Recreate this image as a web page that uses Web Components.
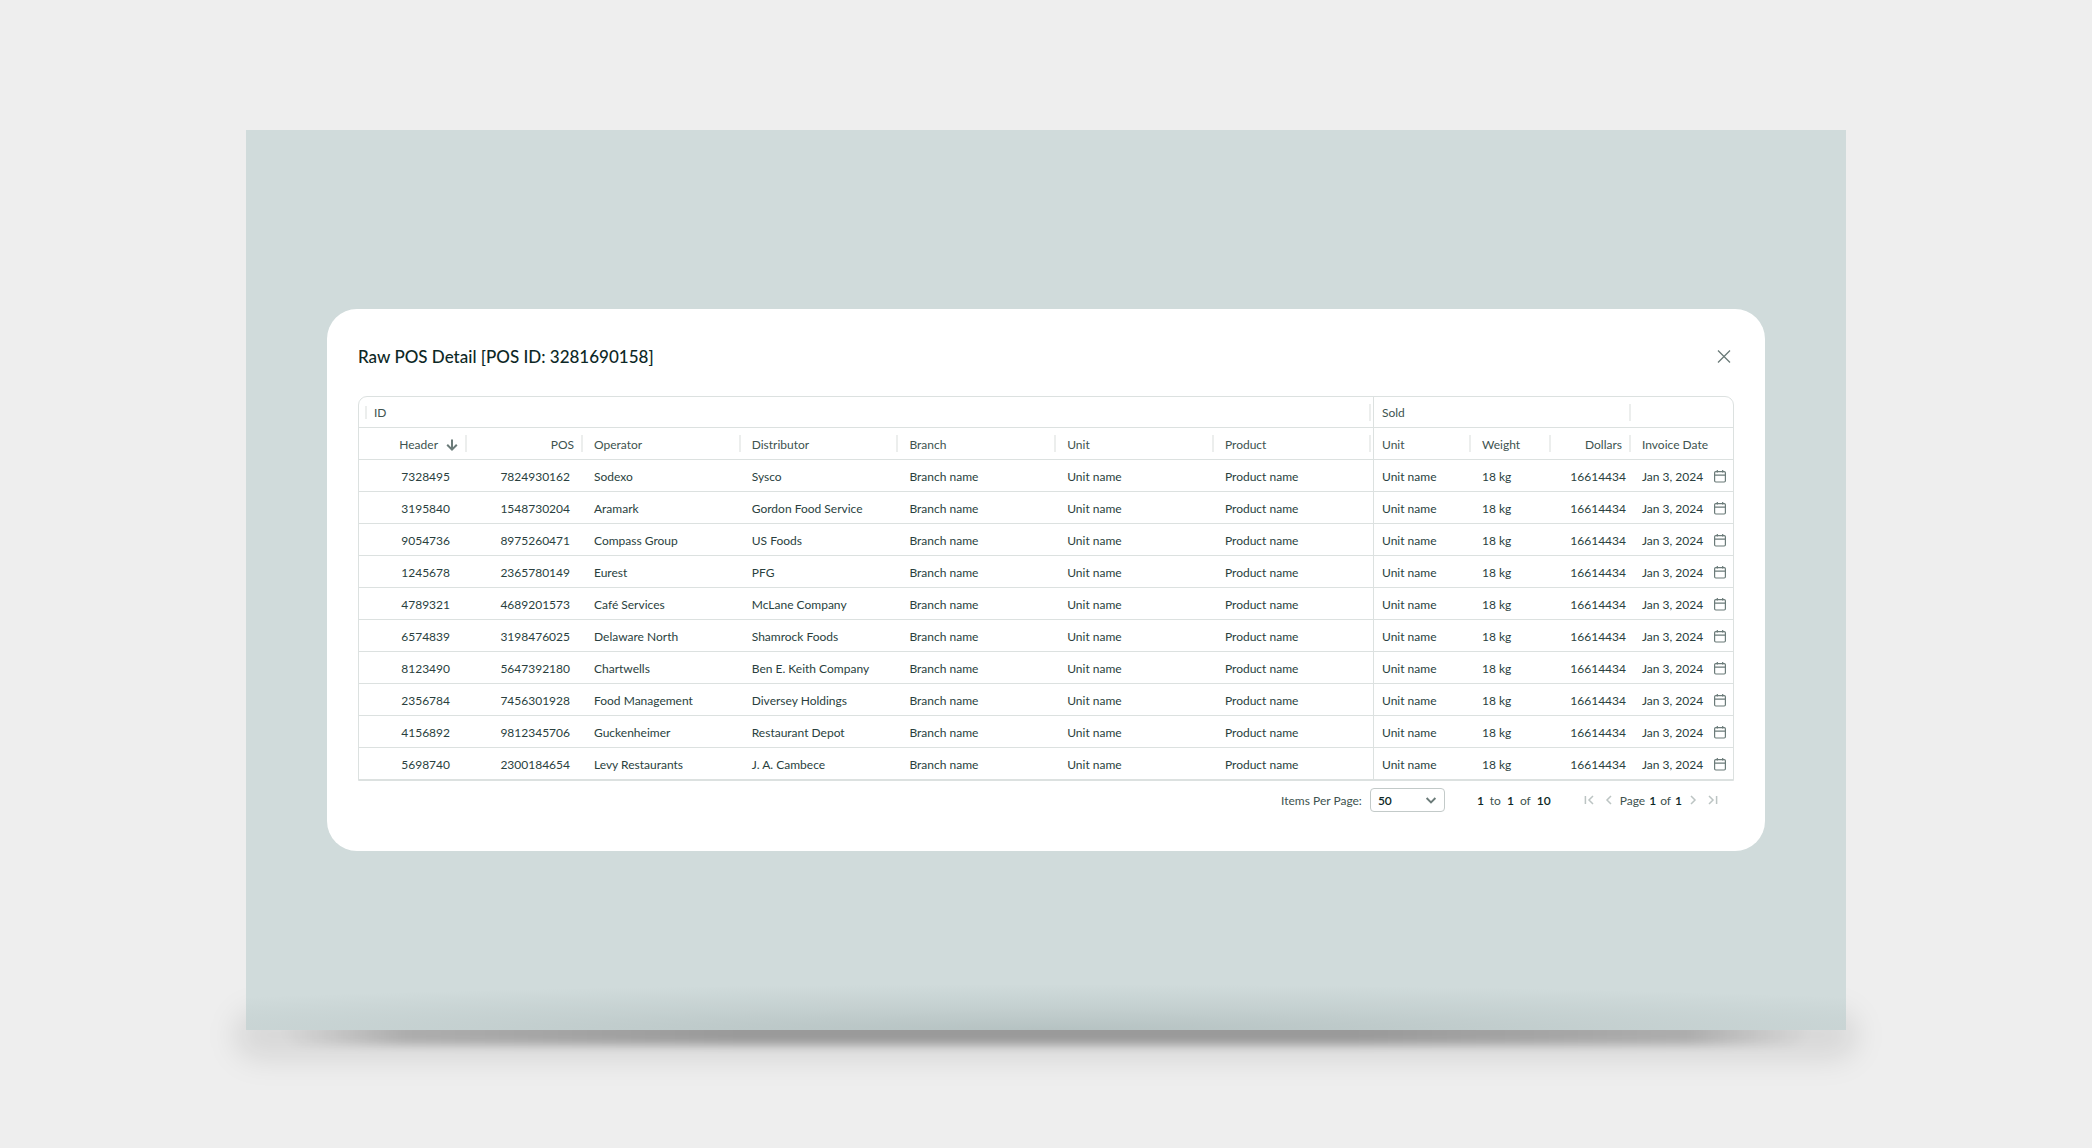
<!DOCTYPE html>
<html lang="en">
<head>
<meta charset="utf-8">
<title>Raw POS Detail</title>
<style>
    html, body {
        margin: 0;
        height: 100%;
    }

    body {
        background: #eeeeee;
        font-family: Lato, "Open Sans", sans-serif;
        font-size: 12px;
        line-height: 16px;
        color: #2a3f3e;
        --color-title: #0d2826;
        --color-muted: #40534f;
        --color-icon: #6b7b79;
        --color-line: #dce1e0;
        --color-tick: #eceeed;
    }
</style>
</head>
<body>
<pos-stage>
    <pos-dialog heading="Raw POS Detail [POS ID: 3281690158]">
        <pos-table></pos-table>
        <pos-pager slot="footer" from="1" to="1" total="10" page="1" pages="1"></pos-pager>
    </pos-dialog>
</pos-stage>

<script>
const ICONS = {
    close: '<path d="M2 1.5L14 13.5M14 1.5L2 13.5" stroke-width="1.3"/>',
    sort: '<path d="M8 2.4V12.4M3.2 7.8L8 12.6L12.8 7.8" stroke-width="2"/>',
    calendar: '<rect x="2.6" y="2.6" width="10.8" height="10.4" rx="1.2" stroke-width="1.2"/><path d="M2.6 6.1H13.4M5.3 1V3.6M10.7 1V3.6" stroke-width="1.2"/>',
    down: '<path d="M3.6 6L8 10.4L12.4 6" stroke-width="1.9"/>',
    first: '<path d="M4.4 4V12M12 4L8 8L12 12" stroke-width="1.5"/>',
    prev: '<path d="M10 4L6 8L10 12" stroke-width="1.5"/>',
    next: '<path d="M6 4L10 8L6 12" stroke-width="1.5"/>',
    last: '<path d="M11.6 4V12M4 4L8 8L4 12" stroke-width="1.5"/>'
};

class PosIcon extends HTMLElement {
    constructor() {
        super();
        this.attachShadow({ mode: "open" });
    }

    connectedCallback() {
        this.shadowRoot.innerHTML = /*html*/ `
            <style>
                :host { display: inline-block; width: 16px; height: 16px; }
                svg { display: block; width: 100%; height: 100%; }
            </style>
            <svg viewBox="0 0 16 16" fill="none" stroke="currentColor" aria-hidden="true">${ICONS[this.getAttribute('name')]}</svg>
        `;
    }
}

const stageTemplate = document.createElement('template');
stageTemplate.innerHTML = /*html*/ `
    <style>
        :host {
            display: flex;
            box-sizing: border-box;
            min-height: 100%;
            padding: 130px 246px 118px;
        }

        .panel {
            position: relative;
            z-index: 0;
            flex: 1;
            display: flex;
            align-items: center;
            padding: 32px 81px;
            background:
                radial-gradient(ellipse 72% 46px at 50% 100%, rgba(60, 80, 80, 0.18), rgba(60, 80, 80, 0.08) 50%, rgba(60, 80, 80, 0)),
                #d0dbdb;
        }

        /* soft shadow on the floor, with a darker core under the bottom edge */
        .shadow {
            position: absolute;
            z-index: -2;
            left: -12px;
            right: -12px;
            bottom: -30px;
            height: 50px;
            border-radius: 25px;
            background: rgba(0, 0, 0, 0.09);
            filter: blur(14px);
        }

        .shadow.core {
            left: 36px;
            right: 36px;
            bottom: -15px;
            height: 40px;
            background: linear-gradient(90deg, rgba(0, 0, 0, 0), rgba(0, 0, 0, 0.2) 8%, rgba(0, 0, 0, 0.29) 30%, rgba(0, 0, 0, 0.29) 70%, rgba(0, 0, 0, 0.2) 92%, rgba(0, 0, 0, 0));
            filter: blur(5px);
        }

        .wrap {
            position: relative;
            z-index: 0;
            flex: 1;
            display: flex;
        }

        slot {
            display: block;
            flex: 1;
        }
    </style>
    <div class="wrap">
        <div class="shadow"></div>
        <div class="shadow core"></div>
        <div class="panel"><slot></slot></div>
    </div>
`;

class PosStage extends HTMLElement {
    constructor() {
        super();
        this.attachShadow({ mode: "open" });
        this.shadowRoot.appendChild(stageTemplate.content.cloneNode(true));
    }
}

const dialogTemplate = document.createElement('template');
dialogTemplate.innerHTML = /*html*/ `
    <style>
        :host {
            display: block;
            box-sizing: border-box;
            padding: 32px 31px 39px;
            border-radius: 30px;
            background: #ffffff;
        }

        header {
            display: flex;
            align-items: center;
            justify-content: space-between;
            margin-bottom: 24px;
        }

        h1 {
            margin: 0;
            font-size: 17px;
            line-height: 31px;
            font-weight: 500;
            color: var(--color-title);
        }

        button {
            display: flex;
            padding: 2px;
            border: 0;
            background: none;
            color: var(--color-icon);
        }
    </style>
    <header>
        <h1></h1>
        <button type="button" aria-label="Close"><pos-icon name="close"></pos-icon></button>
    </header>
    <slot></slot>
    <slot name="footer"></slot>
`;

class PosDialog extends HTMLElement {
    constructor() {
        super();
        this.attachShadow({ mode: "open" });
        this.shadowRoot.appendChild(dialogTemplate.content.cloneNode(true));
    }

    connectedCallback() {
        this.shadowRoot.querySelector('h1').textContent = this.getAttribute('heading');
    }
}

const ROWS = [
    ['7328495', '7824930162', 'Sodexo', 'Sysco'],
    ['3195840', '1548730204', 'Aramark', 'Gordon Food Service'],
    ['9054736', '8975260471', 'Compass Group', 'US Foods'],
    ['1245678', '2365780149', 'Eurest', 'PFG'],
    ['4789321', '4689201573', 'Café Services', 'McLane Company'],
    ['6574839', '3198476025', 'Delaware North', 'Shamrock Foods'],
    ['8123490', '5647392180', 'Chartwells', 'Ben E. Keith Company'],
    ['2356784', '7456301928', 'Food Management', 'Diversey Holdings'],
    ['4156892', '9812345706', 'Guckenheimer', 'Restaurant Depot'],
    ['5698740', '2300184654', 'Levy Restaurants', 'J. A. Cambece']
];

const tableTemplate = document.createElement('template');
tableTemplate.innerHTML = /*html*/ `
    <style>
        :host {
            display: block;
            border: 1px solid var(--color-line);
            border-radius: 9px 9px 0 0;
        }

        table {
            width: 100%;
            table-layout: fixed;
            border-collapse: separate;
            border-spacing: 0;
        }

        .c-id { width: 108px; }
        .c-pos { width: 116px; }
        .c-name { width: 11.48%; }
        .c-unit { width: 97px; }
        .c-small { width: 80px; }
        .c-date { width: 102px; }

        th, td {
            box-sizing: border-box;
            height: 32px;
            padding: 2px 0 0 11px;
            border-bottom: 1px solid var(--color-line);
            font-weight: 400;
            text-align: left;
            white-space: nowrap;
        }

        th {
            color: var(--color-muted);
            background: linear-gradient(var(--color-tick), var(--color-tick)) no-repeat right center / 2px 17px;
        }

        .groups th { height: 31px; }
        .groups th:first-child {
            padding-left: 15px;
            background-image: linear-gradient(var(--color-tick), var(--color-tick)), linear-gradient(var(--color-tick), var(--color-tick));
            background-position: 6px center, right 2px center;
            background-size: 2px 13px, 2px 17px;
        }

        tr th:last-child { background: none; }

        .edge { border-right: 1px solid var(--color-line); }
        th.edge { background-position: right 2px center; }
        .edge + * { padding-left: 8px; }

        .id, .pos, .usd { text-align: right; }
        td.id { padding-right: 17px; }
        td.pos { padding-right: 13px; }
        th.id { padding-right: 7px; }
        th.pos, th.usd { padding-right: 9px; }
        td.usd { padding-right: 5px; }

        .with-icon {
            display: flex;
            align-items: center;
            justify-content: space-between;
            padding-right: 5px;
        }

        th.id .with-icon {
            justify-content: flex-end;
            gap: 6px;
            padding-right: 0;
        }

        pos-icon { color: var(--color-icon); }
    </style>
    <table>
        <colgroup>
            <col class="c-id"><col class="c-pos">
            <col class="c-name"><col class="c-name"><col class="c-name"><col class="c-name"><col>
            <col class="c-unit"><col class="c-small"><col class="c-small"><col class="c-date">
        </colgroup>
        <thead>
            <tr class="groups">
                <th colspan="7" class="edge" scope="colgroup">ID</th>
                <th colspan="3" scope="colgroup">Sold</th>
                <th></th>
            </tr>
            <tr>
                <th class="id" scope="col"><div class="with-icon">Header<pos-icon name="sort"></pos-icon></div></th>
                <th class="pos" scope="col">POS</th>
                <th scope="col">Operator</th>
                <th scope="col">Distributor</th>
                <th scope="col">Branch</th>
                <th scope="col">Unit</th>
                <th class="edge" scope="col">Product</th>
                <th scope="col">Unit</th>
                <th scope="col">Weight</th>
                <th class="usd" scope="col">Dollars</th>
                <th scope="col">Invoice Date</th>
            </tr>
        </thead>
        <tbody></tbody>
    </table>
`;

class PosTable extends HTMLElement {
    constructor() {
        super();
        this.attachShadow({ mode: "open" });
        this.shadowRoot.appendChild(tableTemplate.content.cloneNode(true));
    }

    connectedCallback() {
        this.shadowRoot.querySelector('tbody').innerHTML = ROWS.map(([id, pos, operator, distributor]) => /*html*/ `
            <tr>
                <td class="id">${id}</td>
                <td class="pos">${pos}</td>
                <td>${operator}</td>
                <td>${distributor}</td>
                <td>Branch name</td>
                <td>Unit name</td>
                <td class="edge">Product name</td>
                <td>Unit name</td>
                <td>18 kg</td>
                <td class="usd">16614434</td>
                <td><div class="with-icon">Jan 3, 2024<pos-icon name="calendar"></pos-icon></div></td>
            </tr>
        `).join('');
    }
}

class PosPager extends HTMLElement {
    constructor() {
        super();
        this.attachShadow({ mode: "open" });
    }

    connectedCallback() {
        const value = name => this.getAttribute(name);

        this.shadowRoot.innerHTML = /*html*/ `
            <style>
                :host {
                    display: flex;
                    align-items: center;
                    justify-content: flex-end;
                    padding: 7px 13px 0 0;
                    color: var(--color-muted);
                }

                b { font-weight: 600; color: var(--color-title); }

                label, .range, .page { padding-top: 2px; }

                .select {
                    display: grid;
                    align-items: center;
                    margin: 0 32px 0 8px;
                }

                .select > * { grid-area: 1 / 1; }

                .select pos-icon {
                    justify-self: end;
                    margin-right: 6px;
                    color: var(--color-icon);
                    pointer-events: none;
                }

                select {
                    appearance: none;
                    width: 75px;
                    height: 24px;
                    padding: 1px 7px 0;
                    border: 1px solid #c3cac9;
                    border-radius: 4px;
                    background: #ffffff;
                    font: inherit;
                    font-weight: 600;
                    color: var(--color-title);
                }

                .range {
                    display: flex;
                    gap: 6px;
                    margin-right: 30px;
                }

                nav {
                    display: flex;
                    align-items: center;
                    gap: 4px;
                }

                .page {
                    display: flex;
                    gap: 4px;
                    margin: 0 -1px;
                }

                button {
                    display: flex;
                    padding: 0;
                    border: 0;
                    background: none;
                    color: #bcc4c3;
                }
            </style>
            <label for="size">Items Per Page:</label>
            <div class="select">
                <select id="size"><option>50</option></select>
                <pos-icon name="down"></pos-icon>
            </div>
            <div class="range"><b>${value('from')}</b><span>to</span><b>${value('to')}</b><span>of</span><b>${value('total')}</b></div>
            <nav aria-label="Pages">
                <button type="button" aria-label="First page"><pos-icon name="first"></pos-icon></button>
                <button type="button" aria-label="Previous page"><pos-icon name="prev"></pos-icon></button>
                <div class="page"><span>Page</span><b>${value('page')}</b><span>of</span><b>${value('pages')}</b></div>
                <button type="button" aria-label="Next page"><pos-icon name="next"></pos-icon></button>
                <button type="button" aria-label="Last page"><pos-icon name="last"></pos-icon></button>
            </nav>
        `;
    }
}

customElements.define("pos-icon", PosIcon);
customElements.define("pos-stage", PosStage);
customElements.define("pos-dialog", PosDialog);
customElements.define("pos-table", PosTable);
customElements.define("pos-pager", PosPager);
</script>
</body>
</html>
